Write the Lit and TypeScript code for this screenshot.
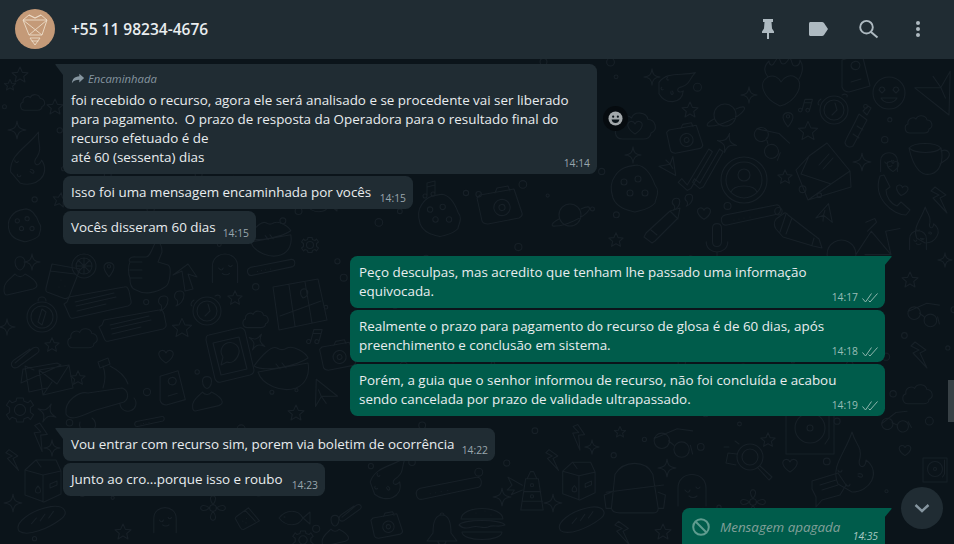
import { LitElement, html, svg, css } from "lit";
import { customElement } from "lit/decorators.js";

type Msg = {
  out?: boolean;
  tail?: boolean;
  w: number;
  gap: number;
  time: string;
  ticks?: boolean;
  forwarded?: boolean;
  lines: string[];
};

const MESSAGES: Msg[] = [
  {
    w: 534,
    gap: 5,
    time: "14:14",
    tail: true,
    forwarded: true,
    lines: [
      "foi recebido o recurso, agora ele será analisado e se procedente vai ser liberado",
      "para pagamento.\u00a0 O prazo de resposta da Operadora para o resultado final do",
      "recurso efetuado é de",
      "até 60 (sessenta) dias",
    ],
  },
  { w: 350, gap: 2, time: "14:15", lines: ["Isso foi uma mensagem encaminhada por vocês"] },
  { w: 193, gap: 2, time: "14:15", lines: ["Vocês disseram 60 dias"] },
  {
    out: true,
    tail: true,
    w: 535,
    gap: 12,
    time: "14:17",
    ticks: true,
    lines: ["Peço desculpas, mas acredito que tenham lhe passado uma informação", "equivocada."],
  },
  {
    out: true,
    w: 535,
    gap: 2,
    time: "14:18",
    ticks: true,
    lines: ["Realmente o prazo para pagamento do recurso de glosa é de 60 dias, após", "preenchimento e conclusão em sistema."],
  },
  {
    out: true,
    w: 535,
    gap: 2,
    time: "14:19",
    ticks: true,
    lines: ["Porém, a guia que o senhor informou de recurso, não foi concluída e acabou", "sendo cancelada por prazo de validade ultrapassado."],
  },
  { w: 432, gap: 12, time: "14:22", tail: true, lines: ["Vou entrar com recurso sim, porem via boletim de ocorrência"] },
  { w: 262, gap: 2, time: "14:23", lines: ["Junto ao cro...porque isso e roubo"] },
];

// wallpaper shapes, all drawn around 0,0 at roughly their real size
const SHAPES: Record<string, string> = {
  star: "M0-8 2.400-2.600 8-2.200 3.700 1.500 5 7 0 4.100-5 7-3.700 1.500-8-2.200-2.400-2.600Z",
  spark: "M0-9C.8-2.500 2.500-.8 9 0 2.500.8.8 2.500 0 9-.8 2.500-2.500.8-9 0-2.500-.8-.8-2.500 0-9Z",
  heart: "M0 7C-8 2-9-4-4.500-5.500-2.500-6-.8-5 0-3 .8-5 2.500-6 4.500-5.500 9-4 8 2 0 7Z",
  bigheart: "M-2 18C-20 10-24-6-14-11-8-14-3-10-1-6 2-11 8-14 13-11 24-5 14 14-2 18ZM-14-11C-20-18-16-24-13-27-13-22-9-22-8-25-6-28-4-30-4-32-1-28-2-24 1-24 5-24 5-28 8-30 11-26 9-22 13-22 17-22 18-25 18-28 22-22 21-16 17-9",
  cloud: "M-9 8C-15 8-15 0-11-1-12-6-6-9-3-6-1-11 7-10 8-5 13-5 15 2 10 4 10 7 7 8 5 8Z",
  smile: "M16 0A16 16 0 1 1-16 0 16 16 0 1 1 16 0ZM-8 5C-5 11 5 11 8 5ZM-10-3C-9-7-5-7-4-3L-7 0ZM4-3C5-7 9-7 10-3L7 0Z",
  ghost: "M-14 16V-2C-14-20 14-20 14-2V16M-7 0C-5 3-3 3-2 0M4-3C5-1 7-1 8-3M-3 6C-1 8 3 8 5 6",
  glasses: "M-5-2A7 7 0 1 1-19-2 7 7 0 1 1-5-2ZM13 6A7 7 0 1 1-1 6 7 7 0 1 1 13 6ZM-6-2-1 2M-19-4 2-13 16-11M14 2 16 10",
  milk: "M-17-12-6-22 14-22 19-11V12L2 20-17 13ZM-17-12 1-7 19-11M1-7V20M-6-22-1-15M-4 4C-8 8-7 11-4 11S0 8-4 4ZM8 2 15-1V3L8 6Z",
  bread: "M-25 14C-31 6-14-8 8-12 24-14 27-5 19 1 6 11-16 20-25 14ZM-12 6-7 0M-3 3 2-4M6 0 11-7",
  flower: "M3 0A3 3 0 1 1-3 0 3 3 0 1 1 3 0ZM0-3C-8-14 8-14 0-3ZM3 0C14-8 14 8 3 0ZM0 3C8 14-8 14 0 3ZM-3 0C-14 8-14-8-3 0Z",
  fish: "M-14 0C-7-9 5-9 10 0L17-6V6L10 0C5 9-7 9-14 0ZM-9-1H-8",
  note: "M-3 6V-7L5-9V4M-3-3 5-5M-3 6A2 2 0 1 1-7 6 2 2 0 1 1-3 6ZM5 4A2 2 0 1 1 1 4 2 2 0 1 1 5 4Z",
  disc: "M-24-24H24V24H-24ZM15-2A15 15 0 1 1-15-2 15 15 0 1 1 15-2ZM3-2A3 3 0 1 1-3-2 3 3 0 1 1 3-2ZM19-20V8L15 14",
  msg: "M-16-6 10-14 18-2 12 8-6 13-12 20-12 10-16 2ZM-8-2 8-7M-6 3 10-2",
  wide: "M-29-8 26-18C29-19 30-17 31-14L33-4C34-1 32 0 30 1L-24 13C-27 14-28 13-29 10L-32 3-34-1-31-3ZM-23-3 16-12M-22 1 18-8M-21 6 8-1",
  person: "M-5-13C-5-20 5-20 5-13 5-7 1-5 0-5-1-5-5-7-5-13ZM-16 15C-17 8-9 3-5-1-2 3 3 2 5-1 9 1 16 5 17 10 17 13 15 13 13 14L-13 20C-15 20-16 19-16 15Z",
  cup: "M-15-14 13-9 2 19C0 21-2 21-4 20L-20 14C-22 13-21 11-21 10ZM-17-7 8-4M-6 2V2M-2 8V8M-8 9V9",
  citrus: "M12 0A12 12 0 1 1-12 0 12 12 0 1 1 12 0ZM8 0A8 8 0 1 1-8 0 8 8 0 1 1 8 0ZM0-8V8M-8 0H8M-6-6 6 6M6-6-6 6",
  thumb: "M-20-8C-22-10-20-14-14-13H-4C0-13 2-21 6-29 10-28 12-24 12-18L8-8 18-5C22-3 20 15 15 17 6 23-6 25-14 20-20 18-20 12-20 8-22 4-22-4-20-8ZM-20-8H-8M-20 0H-8M-20 8H-8",
  arrow: "M-3 14-6-6-15-2 0-13 9 0 0-3 5 12Z",
  compass: "M15 0A15 15 0 1 1-15 0 15 15 0 1 1 15 0ZM11 0A11 11 0 1 1-11 0 11 11 0 1 1 11 0ZM-4 5 0-8 4-5 0 8ZM-4-16A4 4 0 1 1 4-16",
  quotes: "M-8-6C-14-6-15 1-11 3-10 5-10 8-12 9-8 8-4 3-4-2-4-5-6-6-8-6ZM8-11C2-11 1-4 5-2 6 0 6 3 4 4 8 3 12-2 12-7 12-10 10-11 8-11Z",
  clock: "M14 0A14 14 0 1 1-14 0 14 14 0 1 1 14 0ZM10 0A10 10 0 1 1-10 0 10 10 0 1 1 10 0ZM1-7 3 0-2 5M-13-11C-16-9-17-6-15-5M8-15C12-17 14-15 13-13",
  phone: "M-19-20 11-27C14-28 16-26 17-24L26 15C26 17 25 19 22 20L-7 27C-10 28-12 26-13 24L-22-15C-22-18-21-20-19-20ZM-15-12 11-18 19 14-7 20ZM11-2A9 9 0 1 0-5 2L-7 10-1 7C4 9 9 5 11-2Z",
  clip: "M-10 9 8-6C13-9 17-3 11 0L-7 13C-13 16-16 10-11 6L5-5",
  envelope: "M-20-11 14-17 18-15-22 3ZM-9-10-18-14-14 12 4 8M-4-10 26-15 30 8 0 15ZM-4-10 14 4 26-15M0 15 9 2",
  gear: "M7 0A7 7 0 1 1-7 0 7 7 0 1 1 7 0ZM-4-15H4L5-11 10-9 13-12 17-6 13-3V3L17 6 13 12 10 9 5 11 4 15H-4L-5 11-10 9-13 12-17 6-13 3V-3L-17-6-13-12-10-9-5-11Z",
  plane: "M-11-12 13 1-3 4-7 15Z M-3 4 3 10 M-7 -2 -3 4",
  planet: "M11 0A11 11 0 1 1-11 0 11 11 0 1 1 11 0ZM-11 4C-19 8-20 12-14 11-6 11 14 3 19-5 21-9 17-9 11-6",
  camera: "M-20-10 14-16 22 8C23 11 21 12 19 13L-12 19C-15 19-17 18-18 16L-23-7ZM-5-12-3-17 8-19 10-14M10 1A8 8 0 1 1-6 4 8 8 0 1 1 10 1ZM5 2A3 3 0 1 1-1 3 3 3 0 1 1 5 2Z",
  bottle: "M6-17 10-13 14-20 11-22ZM2-14 10-8 -4 18C-7 20-11 19-12 15 -12 12-7 5 2-14ZM-4 6 2 10M0-2 6 2",
  card: "M-11-12 9-18 17 14-4 20C-8 20-10 18-11 15ZM-2-6C-2-11 6-13 7-7 6 0-1-2-2-6ZM-2 10 8 7",
  burger: "M-21-3C-20-17 20-17 21-3ZM-23 3C-20-3 20-3 23 3 15 6 12 2 6 5 0 7-4 3-10 5-16 7-20 6-23 3ZM-20 10H20M-20 10C-20 20 20 20 20 10M-6-9V-9M3-11V-11M9-7V-7",
  tower: "M-8-14H8L14 25H-14ZM-6-14-2-23H2L6-14M-10 2H11M-12 14H13M2-6A2 2 0 1 1-2-6 2 2 0 1 1 2-6ZM2 8A2 2 0 1 1-2 8 2 2 0 1 1 2 8ZM-12-6-30-16-25-6-31 0-22 0-26 6-12 0",
  pack: "M-20-12C-10-28 14-28 22-12L28 26C28 30 26 31 22 31H-15C-20 31-23 30-24 26ZM-24 8-32 11-30 26-24 26M28 8 36 11 34 26 28 26M-30 8 34 0",
  bolt: "M-5-13 6-5 0-2 7 13-7-2-1-5-9-9Z",
  pin: "M0 11C-5 5-7 1-6-3-4-8 4-8 6-3 7 1 5 5 0 11ZM2-2A2 2 0 1 1-2-2 2 2 0 1 1 2-2Z",
  bar: "M-27 3 24-7C29-8 30 0 26 2L-25 13C-31 14-33 5-27 3ZM-18 8V8M-13 7V7M-8 6V6M-2 5V5",
  pencil: "M-22-11-15-16C-13-18-11-17-10-15L21 9 24 18 15 16-15 7-22-1C-24-4-24-8-22-11ZM-12-16-18 2M-6-12-12 4M16 8 14 15",
  pencilb: "M22-19 12-16-12 6-14 10-6 16-3 14 20-9ZM12-16 20-8M-7 3-1 8",
  mic: "M-5-13C-5-20 5-20 5-13V2C5 9-5 9-5 2ZM-12 2C-12 17 12 17 12 2M0 13V20",
  lips: "M-28-1C-20-12-10-22-5-19-2-17 2-17 5-19 12-22 24-14 26-9 16-2-16 6-28-1ZM-24 5C-20 18 0 26 14 21 24 17 28 7 26-4ZM-6-3-2 2M0-4 4 1",
  map: "M-24-15 21-23 30 18-18 28ZM-8-17-2 24M8-20 15 21M-17 14 24-1M6-4C2-8 3-14 8-13 12-12 12-6 6-4Z",
  scooter: "M-34 22C-36 8-20-1-12 1L22-4C28-2 30 6 24 10L-4 18C-18 24-30 30-34 22ZM3-4C5-10 6-18 3-26M-2-30 8-34 10-28 0-24ZM10-26C22-20 26-14 28-8M-8 26A8 8 0 1 1-20 30M20 12A8 8 0 1 0 34 6",
  cookie: "M20-3C26 4 20 11 20 15 14 22 6 22 0 24-8 22-18 20-22 10-24 4-26-4-20-12-14-22-4-22 2-23 10-22 16-14 20-3ZM-8-6A3 3 0 1 1-14-6 3 3 0 1 1-8-6ZM6-9A3 3 0 1 1 0-9 3 3 0 1 1 6-9ZM-2 5A3 3 0 1 1-8 5 3 3 0 1 1-2 5ZM13 5A3 3 0 1 1 7 5 3 3 0 1 1 13 5Z",
  avatar: "M23 0A23 23 0 1 1-23 0 23 23 0 1 1 23 0ZM18 0A18 18 0 1 1-18 0 18 18 0 1 1 18 0ZM6-5A6 6 0 1 1-6-5 6 6 0 1 1 6-5ZM-13 12C-10 4 10 4 13 12",
  ticks: "M-18 13-12 20 12-20 16-17-8 24-12 26-22 17ZM-4 13 2 18 24-20 28-17 6 22 2 24-6 17Z",
  openmail: "M-14-14 4-27 27 1 8 14-22 4ZM-27 0-14-14M-27 0-15 30 28 17 27 1M-15 30 8 14M-4-5 6-16M0-1 10-12",
  mug: "M-19-9C-14-15 8-15 13-9 16 3 12 15 3 17-5 19-14 14-19-9ZM-19-9C-12-3 7-3 13-9M13-6C20-9 24-3 19 2L12 7",
  handset: "M-8-19-4-20 2-8-2-5C-2 2 3 9 9 11L13 7 22 15 18 20C6 20-16 4-8-19Z",
  bike: "M-19 14A16 16 0 1 1-19 13.900M-19 14-2-12 20 14-9 14M-8-22 2-26 4-22-6-12M14-12 30-15M20 14 14-12",
  bell: "M0-13C8-13 9-3 9 5L15 13H-15L-9 5C-9-3-8-13 0-13ZM-4 13C-4 18 4 18 4 13M-2-13A2 2 0 1 1 2-13",
  pawglass: "M13 0A13 13 0 1 1-13 0 13 13 0 1 1 13 0ZM8 0A8 8 0 1 1-8 0 8 8 0 1 1 8 0ZM10 9 22 20 19 23 8 11M-13-3-22-4-24 6-14 8M-26-10-21-10M-15-16-11-13",
  dino: "M-22 22C-30 4-14-10-8-30-4-16 2-16 0-4-4 6 6 8 6 -2 22 10 10 30-8 30ZM-18 8A2 2 0 1 1-22 8M-10 22A2 2 0 1 1-14 22M-2 14C4 18 4 10-2 12",
};

// [shape, x, y, rotation, scale] read off the reference, only what shows between the bubbles
const DOODLES: [string, number, number, number, number][] = [
  ["star", 20, 75, 0, 1], ["star", 55, 107, 0, 1], ["cloud", 33, 103, 0, 0.9], ["spark", 17, 130, 0, 1],
  ["star", 10, 85, 0, 0.7], ["dino", 36, 160, 20, 0.9], ["star", 60, 200, 10, 0.9], ["cookie", 25, 225, 0, 0.7],
  ["person", 20, 275, 0, 1], ["spark", 32, 262, 0, 0.9], ["cup", 67, 278, 0, 1], ["citrus", 84, 266, 0, 1],
  ["pin", 109, 268, 0, 0.8], ["thumb", 150, 270, 0, 1], ["arrow", 188, 277, 0, 1], ["ghost", 225, 268, 0, 0.9],
  ["bar", 272, 265, 0, 0.8], ["map", 297, 302, 0, 1], ["compass", 42, 317, 0, 1], ["wide", 98, 305, 0, 1],
  ["wide", 133, 328, 0, 1], ["quotes", 172, 302, 0, 1], ["clock", 207, 311, 0, 1], ["star", 235, 298, 0, 0.9],
  ["cloud", 256, 320, 0, 0.95], ["star", 182, 328, 0, 1.2], ["phone", 228, 355, 0, 1], ["spark", 7, 327, 0, 0.9],
  ["cloud", 83, 339, 0, 1.1], ["star", 52, 345, 0, 0.9], ["clip", 25, 354, 0, 1], ["heart", 166, 356, 0, 1],
  ["note", 315, 337, 15, 1], ["spark", 257, 342, 30, 1], ["lips", 282, 367, 0, 1], ["camera", 338, 355, 0, 0.8],
  ["envelope", 43, 380, 0, 1], ["star", 78, 378, 0, 0.9], ["scooter", 100, 392, 0, 1], ["card", 170, 387, 0, 0.9],
  ["person", 207, 393, 0, 0.9], ["gear", 20, 410, 0, 0.8], ["spark", 47, 413, 25, 1.1], ["plane", 325, 393, 10, 1],
  ["star", 296, 413, 0, 1], ["bar", 150, 420, 0, 0.5],
  ["spark", 652, 77, 0, 0.9], ["dino", 680, 88, 60, 0.7], ["bigheart", 782, 88, 0, 1], ["card", 853, 72, 0, 1],
  ["smile", 889, 93, 0, 1], ["plane", 935, 93, 190, 1.6], ["planet", 725, 115, 0, 1], ["star", 690, 110, 0, 1],
  ["cloud", 636, 127, 0, 1.5], ["heart", 635, 127, 0, 1], ["camera", 685, 138, 0, 0.8], ["glasses", 770, 143, 35, 1],
  ["note", 806, 106, 15, 0.9], ["clock", 834, 110, 0, 1], ["bottle", 857, 128, 0, 1], ["star", 808, 131, 0, 1.2],
  ["spark", 749, 95, 0, 0.9], ["pin", 788, 118, 0, 0.8], ["cloud", 919, 125, 0, 1], ["mug", 928, 157, 0, 1],
  ["heart", 893, 166, 0, 0.8], ["ghost", 889, 162, 0, 0.6], ["openmail", 823, 170, 0, 1],
  ["avatar", 744, 180, 0, 1], ["ticks", 698, 167, 0, 0.9], ["spark", 727, 143, 15, 1.1], ["spark", 633, 155, 0, 0.9],
  ["plane", 668, 167, 180, 0.7], ["cookie", 635, 188, 0, 1], ["star", 785, 177, 0, 0.9], ["handset", 888, 195, 0, 1],
  ["heart", 902, 190, 10, 0.8], ["pencilb", 658, 227, 0, 1], ["quotes", 683, 203, 0, 0.8], ["heart", 704, 213, 0, 0.9],
  ["bar", 752, 212, 0, 1], ["pencil", 798, 230, 0, 1], ["plane", 827, 215, 50, 0.7], ["bike", 873, 242, 0, 0.9],
  ["mic", 717, 240, 0, 0.9], ["star", 616, 240, 0, 0.9], ["spark", 862, 162, 0, 1], ["bolt", 940, 200, 0, 1],
  ["dino", 930, 225, 0, 0.6], ["ghost", 918, 240, 0, 0.6],
  ["glasses", 675, 443, 0, 1.1], ["pawglass", 750, 457, 0, 1], ["disc", 810, 430, 0, 1], ["star", 768, 440, 0, 0.9],
  ["heart", 790, 465, 0, 1], ["msg", 828, 487, 0, 1], ["glasses", 897, 423, -15, 0.8], ["dino", 860, 462, 0, 1],
  ["ghost", 692, 490, 0, 1], ["flower", 753, 502, 0, 1.1], ["spark", 667, 468, 0, 1], ["bolt", 578, 437, 20, 0.9],
  ["spark", 592, 447, 0, 0.8], ["bolt", 553, 460, 0, 0.8], ["milk", 578, 482, 0, 0.9], ["pack", 633, 485, 0, 0.9],
  ["bread", 583, 518, 0, 0.9], ["tower", 532, 490, 0, 0.8], ["burger", 482, 522, 0, 1], ["spark", 553, 503, 0, 1],
  ["spark", 502, 497, 0, 1], ["bell", 442, 528, 0, 1], ["camera", 387, 525, 0, 0.7], ["bar", 450, 485, 0, 1.1],
  ["star", 663, 532, 0, 1], ["bolt", 623, 533, 0, 0.9], ["star", 620, 432, 0, 0.7], ["dino", 395, 480, 40, 0.8],
  ["milk", 42, 482, 0, 1], ["spark", 13, 503, 0, 1], ["bread", 43, 518, 0, 0.95],
  ["flower", 213, 508, 0, 1.1], ["fish", 293, 518, 0, 1], ["star", 123, 532, 0, 1], ["spark", 52, 448, 0, 0.9],
  ["bolt", 13, 460, 0, 0.8], ["bolt", 40, 437, 20, 1], ["ghost", 165, 520, 0, 0.8], ["gear", 303, 540, 0, 0.6],
  ["cup", 250, 520, 40, 0.6], ["clip", 350, 510, 0, 0.8], ["person", 335, 530, 0, 0.8],
  ["glasses", 925, 315, 0, 0.9], ["star", 910, 280, 0, 1], ["bolt", 920, 355, 0, 1], ["cloud", 918, 395, 0, 1.1],
  ["disc", 935, 470, 0, 0.5], ["heart", 905, 450, 0, 0.8], ["spark", 945, 260, 0, 0.8], ["lips", 270, 238, 0, 0.8],
  ["fish", 320, 205, 0, 1], ["cookie", 440, 215, 0, 0.9], ["star", 380, 190, 0, 1], ["note", 430, 190, 0, 1],
  ["camera", 500, 205, 0, 1], ["planet", 570, 215, 0, 1], ["gear", 310, 245, 0, 0.5],
];

// small filler circles, kept away from the doodles
const makeDots = () => {
  const out: [number, number, number][] = [];
  let seed = 4711;
  const rnd = () => {
    seed = (seed * 16807) % 2147483647;
    return seed / 2147483647;
  };
  for (let i = 0; i < 1400 && out.length < 190; i++) {
    const x = rnd() * 954;
    const y = 60 + rnd() * 484;
    const clear = DOODLES.every((d) => Math.hypot(d[1] - x, d[2] - y) > 19 * d[4] + 3);
    const spaced = out.every((d) => Math.hypot(d[0] - x, d[1] - y) > 12);
    if (clear && spaced) out.push([x, y, 1.5 + rnd() * 2.5]);
  }
  return out;
};

const DOTS = makeDots();

@customElement("app-root")
export class AppRoot extends LitElement {
  static styles = css`
    :host {
      display: block;
      width: 954px;
      height: 544px;
      overflow: hidden;
      background: #0b141a;
      font-family: "Open Sans", "Noto Sans", sans-serif;
      color: #e9edef;
    }
    .app {
      position: relative;
      display: flex;
      flex-direction: column;
      height: 544px;
      overflow: hidden;
    }
    .wall {
      position: absolute;
      left: 0;
      top: 0;
      width: 954px;
      height: 544px;
      fill: none;
      stroke: #172027;
      stroke-width: 1.100;
      stroke-linejoin: round;
      stroke-linecap: round;
    }
    .header {
      position: relative;
      flex: none;
      height: 59px;
      box-sizing: border-box;
      padding: 0 24px 2px 15px;
      display: flex;
      align-items: center;
      background: #202c33;
    }
    .avatar {
      width: 40px;
      height: 40px;
      flex: none;
    }
    .name {
      margin-left: 16px;
      font-size: 15.500px;
      font-weight: 600;
      color: #e9edef;
      flex: 1;
      white-space: nowrap;
    }
    .actions {
      display: flex;
      align-items: center;
      gap: 26px;
      color: #aebac1;
    }
    .actions svg {
      display: block;
      width: 24px;
      height: 24px;
      fill: currentColor;
    }
    .list {
      position: relative;
      display: flex;
      flex-direction: column;
      padding: 0 69px 0 63px;
    }
    .row {
      display: flex;
      justify-content: flex-start;
    }
    .row.out {
      justify-content: flex-end;
    }
    .bubble {
      position: relative;
      box-sizing: border-box;
      padding: 7px 8px;
      border-radius: 7.500px;
      background: #202c33;
      font-size: 13.400px;
      line-height: 19px;
      white-space: nowrap;
    }
    .out .bubble {
      background: #005c4b;
      padding-left: 9px;
    }
    .tail.bubble {
      border-top-left-radius: 0;
    }
    .out .tail.bubble {
      border-top-left-radius: 7.500px;
      border-top-right-radius: 0;
    }
    .tip {
      position: absolute;
      top: 0;
      left: -8px;
      width: 8px;
      height: 13px;
      fill: #202c33;
    }
    .out .tip {
      left: auto;
      right: -7px;
      fill: #005c4b;
    }
    .fwd {
      display: flex;
      align-items: center;
      gap: 3px;
      height: 16px;
      margin: -1px 0 5px;
      font-size: 11.300px;
      font-style: italic;
      color: #8696a0;
    }
    .fwd svg {
      width: 14px;
      height: 14px;
      fill: #8696a0;
    }
    .meta {
      position: absolute;
      right: 7px;
      bottom: 3px;
      display: flex;
      align-items: center;
      gap: 4px;
      font-size: 10.300px;
      line-height: 15px;
      color: #9aa7ae;
    }
    .out .meta {
      color: #99beb7;
    }
    .meta svg {
      width: 16px;
      height: 10px;
      margin-left: 0;
      fill: none;
      stroke: #8fb6ae;
      stroke-width: 1;
    }
    .deleted {
      margin-top: 12px;
      width: 203px;
      height: 50px;
      display: flex;
      align-items: flex-start;
      padding: 10px 0 0 10px;
      gap: 10px;
      font-size: 13.400px;
      font-style: italic;
      color: #83a09a;
    }
    .out .deleted {
      padding-left: 10px;
    }
    .deleted .no {
      width: 18px;
      height: 18px;
      flex: none;
      fill: none;
      stroke: #5f9c8f;
      stroke-width: 2;
    }
    .deleted .meta {
      bottom: auto;
      top: 21px;
      color: #a8c9c2;
    }
    .react {
      position: absolute;
      left: 603px;
      top: 106px;
      width: 25px;
      height: 25px;
      border-radius: 50%;
      background: #060b0f;
      display: flex;
      align-items: center;
      justify-content: center;
    }
    .react svg {
      width: 15px;
      height: 15px;
    }
    .thumb {
      position: absolute;
      right: 0;
      top: 380px;
      width: 6px;
      height: 42px;
      background: #374045;
    }
    .down {
      position: absolute;
      left: 901px;
      top: 487px;
      width: 42px;
      height: 42px;
      border-radius: 50%;
      background: #202c33;
      display: flex;
      align-items: center;
      justify-content: center;
    }
    .down svg {
      width: 20px;
      height: 20px;
      fill: none;
      stroke: #8696a0;
      stroke-width: 2.400;
    }
  `;

  private tip(out?: boolean) {
    return out
      ? html`<svg class="tip" viewBox="0 0 8 13"><path d="M0 0H7C7.500 0 7.800.4 7.500.9L0 10Z" /></svg>`
      : html`<svg class="tip" viewBox="0 0 8 13"><path d="M8 0H1C.5 0 .2.400.5.900L8 11Z" /></svg>`;
  }

  private bubble(m: Msg) {
    return html`<div class="row ${m.out ? "out" : ""}" style="margin-top:${m.gap}px">
      <div class="bubble ${m.tail ? "tail" : ""}" style="width:${m.w}px">
        ${m.tail ? this.tip(m.out) : ""}
        ${m.forwarded
          ? html`<div class="fwd">
              <svg viewBox="0 0 16 16"><path d="M9.500 3 15 8l-5.500 5V10C5.500 10 3 11 1 14 1.500 9.500 4 6.300 9.500 6Z" /></svg>
              Encaminhada
            </div>`
          : ""}
        <div>${m.lines.map((l) => html`<div>${l}</div>`)}</div>
        <div class="meta">
          ${m.time}
          ${m.ticks
            ? html`<svg viewBox="0 0 16 10"><path d="M.5 5.500 3.500 9 9.500.5M6.500 7.500 8 9 15.500.5" /></svg>`
            : ""}
        </div>
      </div>
    </div>`;
  }

  render() {
    return html`<div class="app">
      <svg class="wall" viewBox="0 0 954 544">
        ${DOODLES.map(
          ([k, x, y, r, s]) => svg`<path transform="translate(${x} ${y}) rotate(${r}) scale(${s})" stroke-width=${1.1 / s} d=${SHAPES[k]} />`
        )}
        ${DOTS.map(([x, y, r]) => svg`<circle cx=${x} cy=${y} r=${r} />`)}
      </svg>
      <div class="header">
        <svg class="avatar" viewBox="0 0 40 40">
          <circle cx="20" cy="20" r="20" fill="#c49a78" />
          <g fill="none" stroke="#ecdcc8" stroke-width="0.900">
            <path d="M8 11 14 6 20 9 26 6 32 11 27 26H14ZM8 11 32 11M8 11 27 26M32 11 14 26M14 6 20 9 26 6" />
            <path d="M15 29H25L20 36ZM16.500 32H23.500" />
          </g>
        </svg>
        <div class="name">+55 11 98234-4676</div>
        <div class="actions">
          <svg viewBox="0 0 24 24"><path d="M7 2H17V5H15.500L16 11.500 18 14.500V16H13V22H11V16H6V14.500L8 11.500 8.500 5H7Z" /></svg>
          <svg viewBox="0 0 24 24"><path d="M4.500 5H16C16.800 5 17.500 5.400 18 6L22 12 18 18C17.500 18.600 16.800 19 16 19H4.500C3.600 19 3 18.400 3 17.500V6.500C3 5.600 3.600 5 4.500 5Z" /></svg>
          <svg viewBox="0 0 24 24"><circle cx="10.500" cy="10.200" r="6.300" fill="none" stroke="currentColor" stroke-width="1.900" /><path d="M15 15 21.500 20.500" fill="none" stroke="currentColor" stroke-width="2" /></svg>
          <svg viewBox="0 0 24 24"><circle cx="12" cy="6" r="2" /><circle cx="12" cy="12" r="2" /><circle cx="12" cy="18" r="2" /></svg>
        </div>
      </div>
      <div class="list">
        ${MESSAGES.map((m) => this.bubble(m))}
        <div class="row out">
          <div class="bubble tail deleted">
            ${this.tip(true)}
            <svg class="no" viewBox="0 0 18 18"><circle cx="9" cy="9" r="7.800" /><path d="M3.500 3.500 14.500 14.500" /></svg>
            <span>Mensagem apagada</span>
            <div class="meta">14:35</div>
          </div>
        </div>
      </div>
      <div class="react">
        <svg viewBox="0 0 16 16">
          <circle cx="8" cy="8" r="7.500" fill="#a3a8ab" />
          <circle cx="5.500" cy="6" r="1.200" fill="#0b141a" />
          <circle cx="10.500" cy="6" r="1.200" fill="#0b141a" />
          <path d="M3.800 9H12.200C11.800 11.500 10 12.800 8 12.800S4.200 11.500 3.800 9Z" fill="#0b141a" />
        </svg>
      </div>
      <div class="thumb"></div>
      <div class="down">
        <svg viewBox="0 0 20 20"><path d="M3.500 7 10 13 16.500 7" /></svg>
      </div>
    </div>`;
  }
}
